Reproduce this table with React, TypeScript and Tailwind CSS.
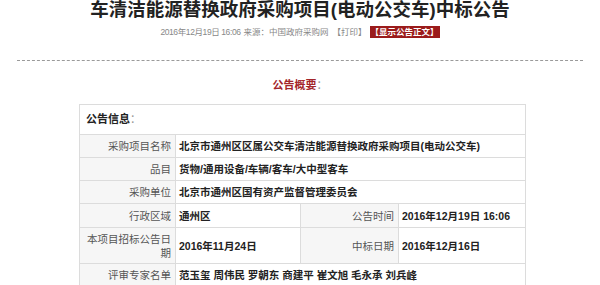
import React from 'react';

const font = { fontFamily: '"Liberation Sans", "Noto Sans CJK SC", sans-serif' };

type Row = { label: string; value: string };

const fullRows: Row[] = [
  { label: '采购项目名称', value: '北京市通州区区属公交车清洁能源替换政府采购项目(电动公交车)' },
  { label: '品目', value: '货物/通用设备/车辆/客车/大中型客车' },
  { label: '采购单位', value: '北京市通州区国有资产监督管理委员会' },
];

const Label: React.FC<{ children: React.ReactNode; className?: string }> = ({ children, className }) => (
  <td
    className={`border border-[#dcdcdc] bg-[#f6f6f6] px-[4px] text-right align-middle text-[10.5px] leading-[14px] text-[#555] ${className ?? ''}`}
  >
    {children}
  </td>
);

const Value: React.FC<{ children: React.ReactNode; colSpan?: number }> = ({ children, colSpan }) => (
  <td
    colSpan={colSpan}
    className="border border-[#dcdcdc] bg-white px-[3px] align-middle text-[10.5px] font-bold leading-[14px] text-[#222]"
  >
    {children}
  </td>
);

const App: React.FC = () => {
  return (
    <div className="h-[285px] w-[600px] overflow-hidden bg-white" style={font}>
      {/* heading */}
      <h1 className="mt-[-2px] text-center text-[18.5px] font-bold leading-[24px] text-[#222]">
        车清洁能源替换政府采购项目(电动公交车)中标公告
      </h1>
      <div className="mt-[4px] flex items-center justify-center text-[8.5px] leading-[12px] text-[#888]">
        <span className="tracking-[-0.4px]">2016年12月19日 16:06</span>
        <span className="ml-[3px]">来源：中国政府采购网</span>
        <span className="ml-[4px]">【打印】</span>
        <span className="ml-[3px] bg-[#9b1b1b] px-[1px] font-bold text-white">【显示公告正文】</span>
      </div>

      <div className="mx-[17px] mt-[22px] border-t border-dashed border-[#9a9a9a]" />

      <div className="mt-[17px] text-center text-[11px] font-bold leading-[14px] text-[#a3262a]">
        公告概要<span className="font-normal text-[#999]">：</span>
      </div>

      {/* summary table */}
      <table className="ml-[79px] mt-[12px] w-[446px] table-fixed border-collapse">
        <colgroup>
          <col className="w-[96px]" />
          <col className="w-[125px]" />
          <col className="w-[98px]" />
          <col className="w-[127px]" />
        </colgroup>
        <tbody>
          <tr className="h-[30px]">
            <td colSpan={4} className="border border-[#dcdcdc] px-[6px] text-[11px] font-bold text-[#222]">
              公告信息<span className="font-normal text-[#999]">：</span>
            </td>
          </tr>
          {fullRows.map((r) => (
            <tr key={r.label} className="h-[23px]">
              <Label>{r.label}</Label>
              <Value colSpan={3}>{r.value}</Value>
            </tr>
          ))}
          <tr className="h-[24px]">
            <Label>行政区域</Label>
            <Value>通州区</Value>
            <Label>公告时间</Label>
            <Value>2016年12月19日 16:06</Value>
          </tr>
          <tr className="h-[36px]">
            <Label>本项目招标公告日期</Label>
            <Value>2016年11月24日</Value>
            <Label>中标日期</Label>
            <Value>2016年12月16日</Value>
          </tr>
          <tr className="h-[23px]">
            <Label>评审专家名单</Label>
            <Value colSpan={3}>范玉玺 周伟民 罗朝东 商建平 崔文旭 毛永承 刘兵峰</Value>
          </tr>
        </tbody>
      </table>
    </div>
  );
};

export default App;
